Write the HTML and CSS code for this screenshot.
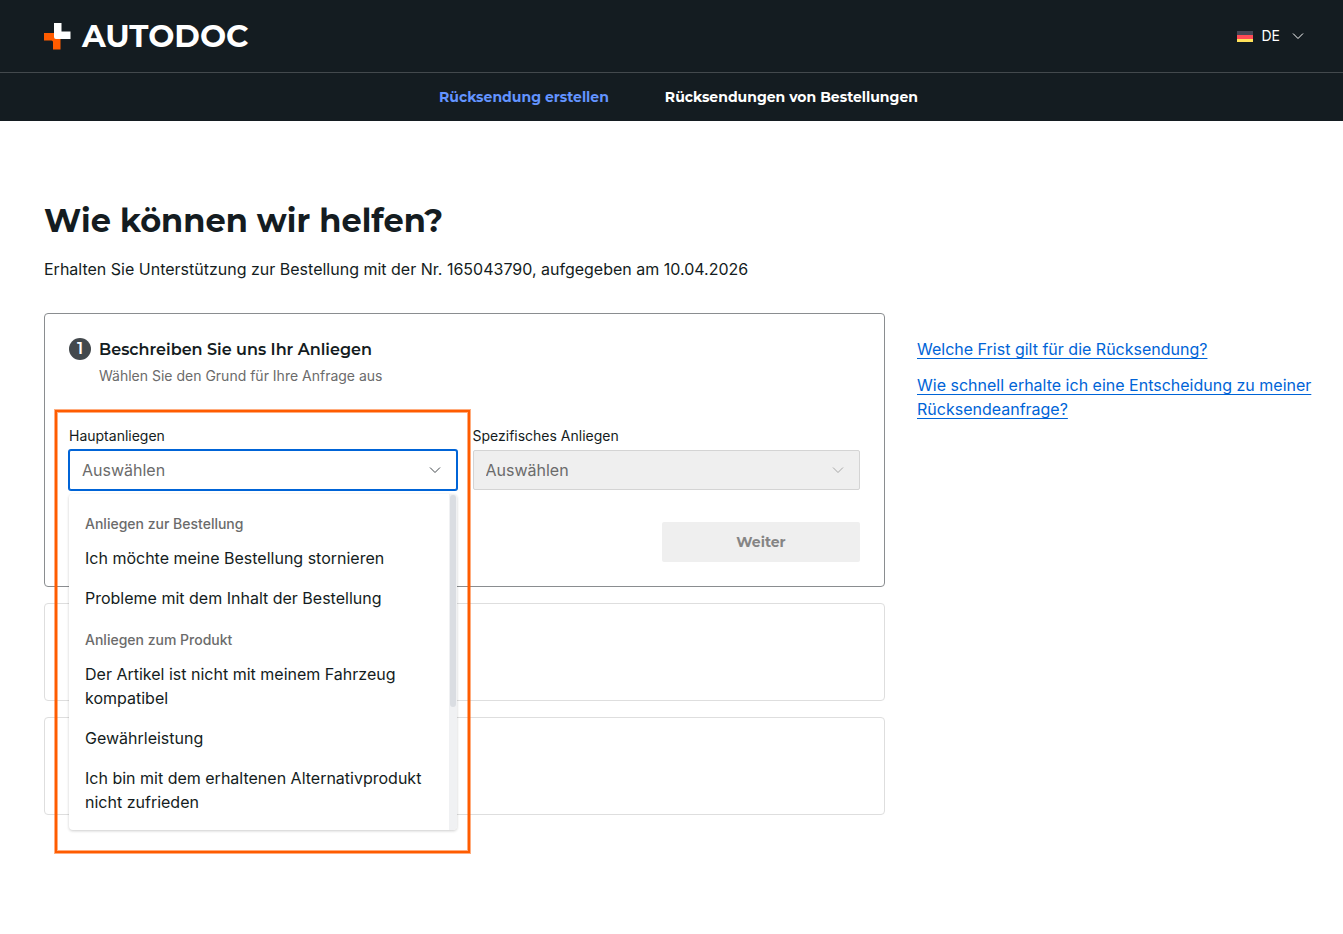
FILE: index.html
```html
<!DOCTYPE html>
<html lang="de">

<head>
    <title>Rücksendung erstellen</title>
    <meta charset="utf-8">
    <meta name="viewport" content="width=device-width, initial-scale=1.0">
    <link rel="stylesheet" href="styles.css">
</head>

<body>
    <header>
        <div class="topbar">
            <a class="logo" href="#">
                <svg width="27" height="27" viewBox="0 0 27 27" aria-hidden="true">
                    <path fill="#ff5c00" d="M0 10h16.500v16.500H9V19q0-1.500-1.500-1.500H0z" />
                    <path fill="#fff" d="M10 0h7.500v8.500h9v7.500H12q-2 0-2-2z" />
                </svg>
                <span>AUTODOC</span>
            </a>
            <button class="language">
                <svg class="flag" width="16" height="11" viewBox="0 0 16 11" aria-hidden="true">
                    <rect width="16" height="4" fill="#464655" />
                    <rect y="4" width="16" height="4" fill="#ff4b55" />
                    <rect y="8" width="16" height="3" fill="#ffe15a" />
                </svg>
                DE
                <svg class="chevron" width="12" height="8" viewBox="0 0 12 8" aria-hidden="true">
                    <path d="M1 1.5l5 5 5-5" />
                </svg>
            </button>
        </div>
        <nav>
            <a class="valgt" href="#">Rücksendung erstellen</a>
            <a href="#">Rücksendungen von Bestellungen</a>
        </nav>
    </header>

    <main>
        <h1>Wie können wir helfen?</h1>
        <p class="intro">Erhalten Sie Unterstützung zur Bestellung mit der Nr. 165043790, aufgegeben am 10.04.2026</p>

        <div class="content">
            <div class="steps">
                <form class="step active">
                    <div class="step-head">
                        <span class="number">1</span>
                        <div>
                            <h2>Beschreiben Sie uns Ihr Anliegen</h2>
                            <p>Wählen Sie den Grund für Ihre Anfrage aus</p>
                        </div>
                    </div>

                    <div class="fields">
                        <div class="field open">
                            <label for="haupt">Hauptanliegen</label>
                            <div class="select">
                                <select id="haupt">
                                    <option>Auswählen</option>
                                </select>
                                <svg class="chevron" width="12" height="8" viewBox="0 0 12 8" aria-hidden="true">
                                    <path d="M1 1.5l5 5 5-5" />
                                </svg>
                                <div class="menu">
                                    <div class="menu-list">
                                        <h3>Anliegen zur Bestellung</h3>
                                        <button type="button">Ich möchte meine Bestellung stornieren</button>
                                        <button type="button">Probleme mit dem Inhalt der Bestellung</button>
                                        <h3>Anliegen zum Produkt</h3>
                                        <button type="button">Der Artikel ist nicht mit meinem Fahrzeug kompatibel</button>
                                        <button type="button">Gewährleistung</button>
                                        <button type="button">Ich bin mit dem erhaltenen Alternativprodukt nicht zufrieden</button>
                                    </div>
                                    <div class="track">
                                        <div class="thumb"></div>
                                    </div>
                                </div>
                            </div>
                            <div class="marker"></div>
                        </div>

                        <div class="field">
                            <label for="spezifisch">Spezifisches Anliegen</label>
                            <div class="select">
                                <select id="spezifisch" disabled>
                                    <option>Auswählen</option>
                                </select>
                                <svg class="chevron" width="12" height="8" viewBox="0 0 12 8" aria-hidden="true">
                                    <path d="M1 1.5l5 5 5-5" />
                                </svg>
                            </div>
                        </div>
                    </div>

                    <button class="next" type="submit" disabled>Weiter</button>
                </form>

                <div class="step empty"></div>
                <div class="step empty"></div>
            </div>

            <aside>
                <a href="#">Welche Frist gilt für die Rücksendung?</a>
                <a href="#">Wie schnell erhalte ich eine Entscheidung zu meiner Rücksendeanfrage?</a>
            </aside>
        </div>
    </main>
</body>

</html>
```

FILE: styles.css
```css
* {
    box-sizing: border-box;
}

body {
    margin: 0;
    font-family: Inter, sans-serif;
    font-size: 16px;
    line-height: 24px;
    color: #141c21;
    background-color: white;
}

h1,
h2,
h3,
p {
    margin: 0;
}

button,
select {
    font-family: inherit;
    font-size: 16px;
    line-height: 24px;
}

h1,
h2,
nav,
.logo,
.number,
.next {
    font-family: Montserrat, Inter, sans-serif;
}

/* header */

header {
    background-color: #141c21;
}

.topbar {
    display: flex;
    justify-content: space-between;
    align-items: center;
    height: 73px;
    padding: 0 39px 0 44px;
    border-bottom: 1px solid #43494d;
}

.logo {
    display: flex;
    align-items: center;
    gap: 11px;
    font-size: 31px;
    font-weight: 700;
    line-height: 40px;
    color: white;
    text-decoration: none;
}

.language {
    display: flex;
    align-items: center;
    gap: 8px;
    padding: 0;
    border: none;
    background: none;
    color: white;
    font-size: 14px;
}

.chevron {
    fill: none;
    stroke: currentColor;
}

.language .chevron {
    margin-left: 4px;
}

nav {
    display: flex;
    justify-content: center;
    gap: 56px;
    padding: 12px 30px 12px 44px;
}

nav a {
    color: white;
    font-size: 14px;
    font-weight: 700;
    text-decoration: none;
}

nav .valgt {
    color: #6394ff;
}

/* page */

main {
    padding: 80px 30px 80px 44px;
}

h1 {
    font-size: 32px;
    font-weight: 700;
    line-height: 40px;
}

.intro {
    margin-top: 16px;
}

.content {
    display: grid;
    grid-template-columns: 1fr 396px;
    gap: 32px;
    margin-top: 32px;
}

.steps {
    display: flex;
    flex-direction: column;
    gap: 16px;
}

.step {
    padding: 24px;
    border: 1px solid #dedede;
    border-radius: 4px;
}

.step.active {
    border-color: #8a8d90;
}

.step.empty {
    height: 98px;
}

.step-head {
    display: flex;
    gap: 8px;
}

.step-head h2 {
    font-size: 16px;
    font-weight: 600;
    line-height: 24px;
}

.step-head p {
    margin-top: 4px;
    font-size: 14px;
    line-height: 20px;
    color: #6b6b6b;
}

.number {
    width: 22px;
    height: 22px;
    border-radius: 50%;
    background-color: #43494d;
    color: white;
    font-size: 16px;
    font-weight: 600;
    line-height: 22px;
    text-align: center;
}

/* fields */

.fields {
    display: grid;
    grid-template-columns: 1fr 1fr;
    gap: 16px;
    margin-top: 40px;
}

.field {
    position: relative;
}

.field label {
    display: block;
    margin-bottom: 4px;
    font-size: 14px;
    line-height: 20px;
}

.select {
    position: relative;
}

.select select {
    display: block;
    width: 100%;
    height: 40px;
    padding: 0 12px;
    border: 1px solid #d4d4d4;
    border-radius: 2px;
    appearance: none;
    background-color: white;
    color: #6b6b6b;
    opacity: 1;
}

.select select:disabled {
    background-color: #efefef;
}

.open select {
    border-color: #0064d7;
    box-shadow: 0 0 0 1px #0064d7;
}

.select > .chevron {
    position: absolute;
    top: 16px;
    right: 16px;
    color: #43494d;
}

.select select:disabled + .chevron {
    color: #a8a8a8;
}

.menu {
    position: absolute;
    top: 44px;
    left: 0;
    z-index: 1;
    display: flex;
    width: 100%;
    height: 336px;
    border-radius: 4px;
    overflow: hidden;
    background-color: white;
    box-shadow: 0 1px 3px rgba(0, 0, 0, 0.2);
}

.menu-list {
    flex: 1;
    padding: 8px 0;
}

.menu h3 {
    padding: 12px 16px 4px;
    font-size: 14px;
    font-weight: 500;
    line-height: 20px;
    color: #6b6b6b;
}

.menu button {
    display: block;
    width: 100%;
    padding: 8px 16px;
    border: none;
    background: none;
    color: #141c21;
    text-align: left;
    cursor: pointer;
}

.track {
    width: 8px;
    padding: 1px;
    background-color: #f0f1f3;
}

.thumb {
    height: 212px;
    border-radius: 3px;
    background-color: #dadde2;
}

/* orange frame round the open field */
.marker {
    position: absolute;
    top: -16px;
    left: -14px;
    right: -13px;
    z-index: 2;
    height: 443px;
    border: 2px solid #ff5c00;
    box-shadow: 0 0 0 1px rgba(255, 92, 0, 0.5), inset 0 0 0 1px rgba(255, 92, 0, 0.5);
    pointer-events: none;
}

.next {
    display: block;
    width: 198px;
    height: 40px;
    margin: 32px 0 0 auto;
    border: none;
    border-radius: 2px;
    background-color: #efefef;
    color: #858585;
    font-size: 14px;
    font-weight: 700;
}

/* links */

aside {
    display: flex;
    flex-direction: column;
    align-items: flex-start;
    gap: 12px;
    padding-top: 24px;
}

aside a {
    color: #0064d7;
    text-decoration-thickness: 1px;
    text-underline-offset: 3px;
    text-decoration-skip-ink: none;
}

@media screen and (max-width: 900px) {
    .content {
        grid-template-columns: 1fr;
    }
}
```
